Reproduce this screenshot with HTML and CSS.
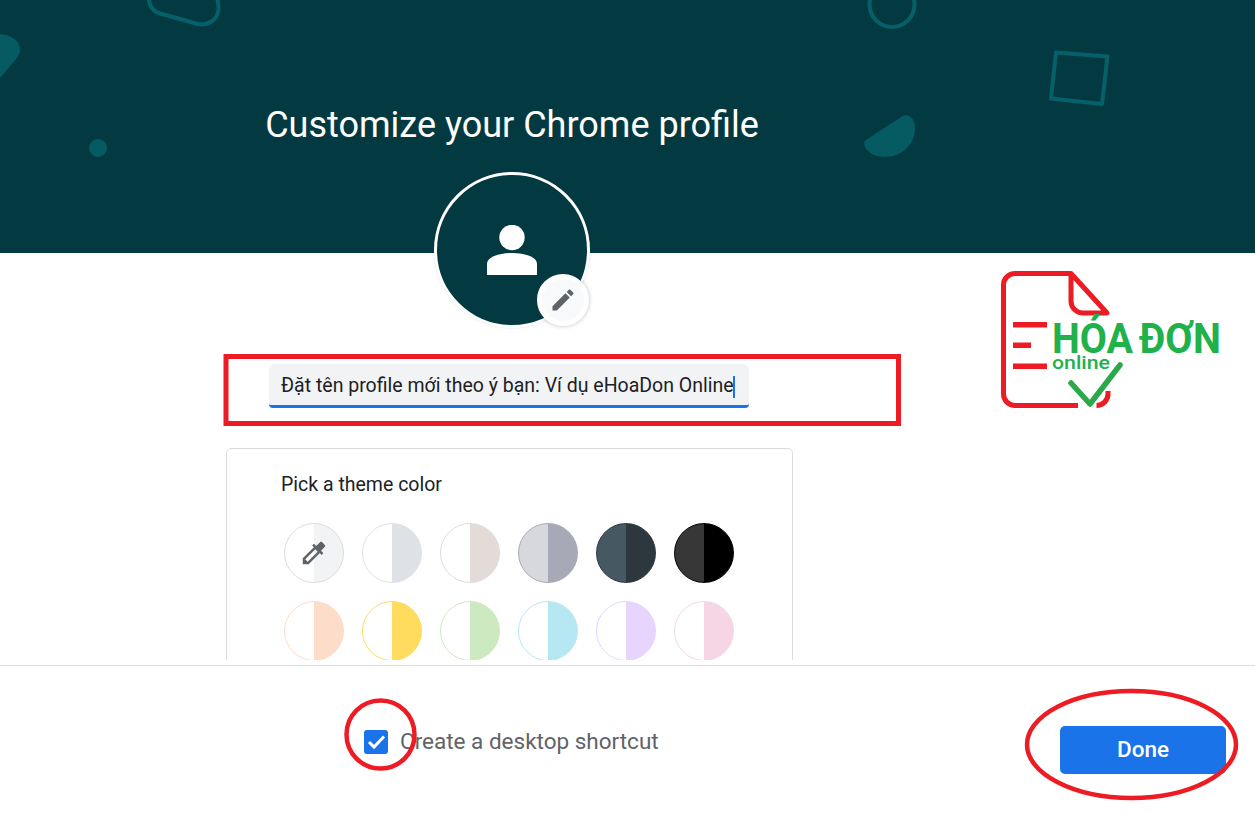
FILE: index.html
```html
<!DOCTYPE html>
<html>
<head>
  <title>Customize your Chrome profile</title>
  <link rel="stylesheet" href="styles.css">
</head>
<body>
  <div class="page">
    <div class="content">
      <div class="banner">
        <svg class="banner-shapes" width="1255" height="253" viewBox="0 0 1255 253">
          <path class="shape-fill" d="M0 34C8 35 20 38 20 50C20 54 18 56 16 59L0 78Z"/>
          <circle class="shape-fill" cx="98" cy="148" r="9"/>
          <path class="shape-line" d="M149 -5C148 5 152 11 160 13.5L198 24C208 26 217 20 218.5 10C219 5 218 2 217 -2"/>
          <circle class="shape-line" cx="892" cy="4.5" r="22.5"/>
          <polygon class="shape-line" points="1056,52.5 1107.5,56.5 1102,104 1051,98.5"/>
          <path class="shape-fill" d="M864.5 141L901 117C908 112 915 118 915 128C915 145 901 157 885 157C876 157 868 153 865 147C864 145 864 143 864.5 141Z"/>
        </svg>
        <h1 class="title">Customize your Chrome profile</h1>
      </div>

      <div class="avatar">
        <svg width="50" height="50" viewBox="0 0 50 50">
          <circle cx="25" cy="12.5" r="12.7" fill="#fff"/>
          <path d="M0 50V39C0 32 12 28 25 28C38 28 50 32 50 39V50Z" fill="#fff"/>
        </svg>
        <div class="edit-btn">
          <svg width="28" height="28" viewBox="0 0 24 24">
            <path fill="#5f6368" d="M3 17.25V21h3.75L17.81 9.94l-3.75-3.75L3 17.25zM20.71 7.04c.39-.39.39-1.02 0-1.41l-2.34-2.34c-.39-.39-1.02-.39-1.41 0l-1.83 1.83 3.75 3.75 1.83-1.83z"/>
          </svg>
        </div>
      </div>

      <div class="name-field">Đặt tên profile mới theo ý bạn: Ví dụ eHoaDon Online<span class="caret"></span></div>

      <div class="theme-card">
        <div class="theme-label">Pick a theme color</div>
        <div class="swatches">
          <div class="swatch sw-picker">
            <svg width="30" height="30" viewBox="0 0 24 24">
              <path fill="#5f6368" d="M20.71 5.63l-2.34-2.34c-.39-.39-1.02-.39-1.41 0l-3.12 3.12-1.93-1.91-1.41 1.41 1.42 1.42L3 16.25V21h4.75l8.92-8.92 1.42 1.42 1.41-1.41-1.92-1.92 3.12-3.12c.4-.4.4-1.03.01-1.42zM6.92 19L5 17.08l8.06-8.06 1.92 1.92L6.92 19z"/>
            </svg>
          </div>
          <div class="swatch sw-grey"></div>
          <div class="swatch sw-stone"></div>
          <div class="swatch sw-slate"></div>
          <div class="swatch sw-navy"></div>
          <div class="swatch sw-black"></div>
          <div class="swatch sw-peach"></div>
          <div class="swatch sw-yellow"></div>
          <div class="swatch sw-green"></div>
          <div class="swatch sw-cyan"></div>
          <div class="swatch sw-violet"></div>
          <div class="swatch sw-pink"></div>
        </div>
      </div>
    </div>

    <div class="footer">
      <div class="shortcut">
        <div class="checkbox">
          <svg width="24" height="24" viewBox="0 0 24 24">
            <path d="M5 12l5 5L20 6.500" fill="none" stroke="#fff" stroke-width="3"/>
          </svg>
        </div>
        <span class="shortcut-label">Create a desktop shortcut</span>
      </div>
      <button class="done-btn">Done</button>
    </div>

    <svg class="markup" width="1255" height="813" viewBox="0 0 1255 813">
      <rect class="mark-box" x="226" y="356.5" width="672.5" height="67"/>
      <ellipse class="mark-ring" cx="380.5" cy="734.5" rx="34" ry="34"/>
      <ellipse class="mark-ring" cx="1131.5" cy="744.5" rx="104.5" ry="53.5"/>

      <path class="logo-page" d="M1071 273.5H1015A11.5 11.5 0 0 0 1003.5 285V394A11.5 11.5 0 0 0 1015 405.5H1078"/>
      <path class="logo-page" d="M1071 273.5L1107 313H1083A12 12 0 0 1 1071 301Z"/>
      <path class="logo-page" d="M1108 391V394A11.5 11.5 0 0 1 1096.500 405.500"/>
      <rect class="logo-bar" x="1013" y="322" width="34" height="5.500"/>
      <rect class="logo-bar" x="1013" y="342.500" width="18" height="5.500"/>
      <rect class="logo-bar" x="1013" y="363.500" width="34" height="5.500"/>
      <text class="logo-big" x="1052" y="352.500" textLength="81" lengthAdjust="spacingAndGlyphs">HÓA</text>
      <text class="logo-big" x="1139" y="352.500" textLength="82" lengthAdjust="spacingAndGlyphs">ĐƠN</text>
      <text class="logo-small" x="1052" y="369" textLength="58" lengthAdjust="spacingAndGlyphs">online</text>
      <path class="logo-check" d="M1071 383L1090 404L1120 365"/>
    </svg>
  </div>
</body>
</html>
```

FILE: styles.css
```css
body {
  margin: 0;
  font-family: Roboto, Arial, sans-serif;
  background-color: #fff;
}

.page {
  position: relative;
  width: 1255px;
  height: 813px;
  overflow: hidden;
}

.content {
  height: 660px;
  overflow: hidden;
}

.banner {
  position: relative;
  height: 253px;
  background-color: #033a41;
}

.banner-shapes {
  position: absolute;
  left: 0;
  top: 0;
}

.shape-fill {
  fill: #055b61;
}

.shape-line {
  fill: none;
  stroke: #06606a;
  stroke-width: 4;
  stroke-linejoin: round;
}

.title {
  position: relative;
  width: 1024px;
  margin: 0;
  padding-top: 104px;
  text-align: center;
  color: #fff;
  font-size: 36px;
  font-weight: 400;
  line-height: 42px;
}

.avatar {
  position: relative;
  display: flex;
  align-items: center;
  justify-content: center;
  box-sizing: border-box;
  width: 156px;
  height: 156px;
  margin: -81px 0 0 434px;
  background-color: #033a41;
  border: 3px solid #fff;
  border-radius: 50%;
  box-shadow: 0 0 2px rgba(60, 64, 67, 0.2);
}

.edit-btn {
  position: absolute;
  right: -2px;
  bottom: -1px;
  display: flex;
  align-items: center;
  justify-content: center;
  box-sizing: border-box;
  width: 52px;
  height: 52px;
  background-color: #f8f9fa;
  border: 5px solid #fff;
  border-radius: 50%;
  box-shadow: 0 0 4px rgba(60, 64, 67, 0.35);
}

.name-field {
  box-sizing: border-box;
  width: 480px;
  height: 44px;
  margin: 36px 0 0 269px;
  padding: 0 12px;
  background-color: #f1f3f4;
  border-bottom: 3px solid #1a73e8;
  border-radius: 6px 6px 4px 4px;
  color: #202124;
  font-size: 19.5px;
  line-height: 44px;
  white-space: nowrap;
}

.caret {
  display: inline-block;
  width: 2px;
  height: 22px;
  margin-left: -1px;
  vertical-align: middle;
  background-color: #1a73e8;
}

.theme-card {
  box-sizing: border-box;
  width: 567px;
  height: 300px;
  margin: 40px 0 0 226px;
  padding: 25px 0 0 54px;
  border: 1px solid #dadce0;
  border-radius: 5px;
}

.theme-label {
  color: #202124;
  font-size: 19.5px;
  line-height: 22px;
}

.swatches {
  display: grid;
  grid-template-columns: repeat(6, 60px);
  gap: 18px;
  margin: 27px 0 0 3px;
}

.swatch {
  display: flex;
  align-items: center;
  justify-content: center;
  box-sizing: border-box;
  width: 60px;
  height: 60px;
  border-radius: 50%;
  border: 1px solid;
}

.sw-picker { border-color: #dadce0; background: linear-gradient(90deg, #fff 50%, #f1f3f4 50%); }
.sw-grey { border-color: #dee1e6; background: linear-gradient(90deg, #fff 50%, #dee1e6 50%); }
.sw-stone { border-color: #e3dbd8; background: linear-gradient(90deg, #fff 50%, #e3dbd8 50%); }
.sw-slate { border-color: #a7aab6; background: linear-gradient(90deg, #d7d8dd 50%, #a7aab6 50%); }
.sw-navy { border-color: #2d383e; background: linear-gradient(90deg, #465862 50%, #2d383e 50%); }
.sw-black { border-color: #000; background: linear-gradient(90deg, #373737 50%, #000 50%); }
.sw-peach { border-color: #fddcc9; background: linear-gradient(90deg, #fff 50%, #fddcc9 50%); }
.sw-yellow { border-color: #ffdb5e; background: linear-gradient(90deg, #fff 50%, #ffdb5e 50%); }
.sw-green { border-color: #cde9c0; background: linear-gradient(90deg, #fff 50%, #cde9c0 50%); }
.sw-cyan { border-color: #b6e8f3; background: linear-gradient(90deg, #fff 50%, #b6e8f3 50%); }
.sw-violet { border-color: #e8d5fd; background: linear-gradient(90deg, #fff 50%, #e8d5fd 50%); }
.sw-pink { border-color: #f6d5e5; background: linear-gradient(90deg, #fff 50%, #f6d5e5 50%); }

.footer {
  display: flex;
  align-items: flex-start;
  margin-top: 5px;
  padding: 60px 29px 0 364px;
  border-top: 1px solid #dadce0;
}

.shortcut {
  display: flex;
  align-items: center;
  gap: 12px;
  margin-top: 3px;
}

.checkbox {
  width: 24px;
  height: 24px;
  background-color: #1a73e8;
  border-radius: 3px;
}

.shortcut-label {
  margin-top: -1px;
  color: #5f6368;
  font-size: 22.5px;
}

.done-btn {
  width: 166px;
  height: 48px;
  margin-left: auto;
  padding-bottom: 3px;
  background-color: #1a73e8;
  border: none;
  border-radius: 5px;
  color: #fff;
  font-family: Roboto, Arial, sans-serif;
  font-size: 22.5px;
  font-weight: 500;
}

.markup {
  position: absolute;
  left: 0;
  top: 0;
  pointer-events: none;
}

.mark-box {
  fill: none;
  stroke: #ed1c24;
  stroke-width: 5;
}

.mark-ring {
  fill: none;
  stroke: #ed1c24;
  stroke-width: 4.500;
}

.logo-page {
  fill: none;
  stroke: #ed1c24;
  stroke-width: 5;
  stroke-linejoin: round;
}

.logo-bar {
  fill: #ed1c24;
}

.logo-big {
  fill: #21b14b;
  font-family: Roboto, Arial, sans-serif;
  font-size: 42px;
  font-weight: 700;
}

.logo-small {
  fill: #21b14b;
  font-family: Roboto, Arial, sans-serif;
  font-size: 19px;
  font-weight: 500;
}

.logo-check {
  fill: none;
  stroke: #2aa84a;
  stroke-width: 5.500;
  stroke-linecap: round;
  stroke-linejoin: round;
}
```
